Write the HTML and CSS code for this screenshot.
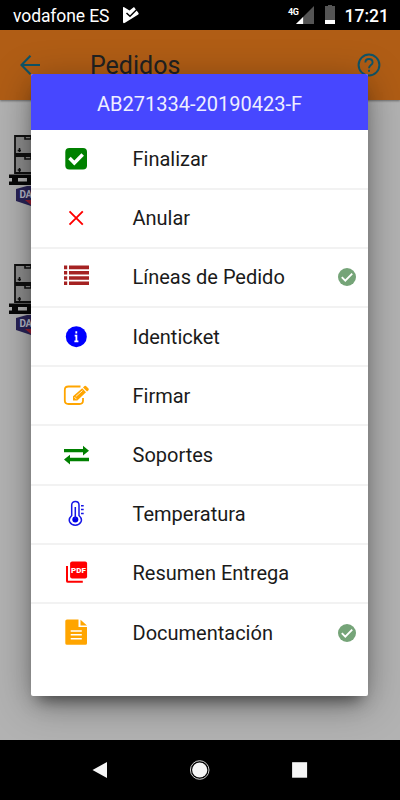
FILE: index.html
```html
<!DOCTYPE html>
<html lang="es">
<head>
    <meta charset="UTF-8">
    <meta name="viewport" content="width=device-width, initial-scale=1.0">
    <title>Pedidos</title>
    <link rel="stylesheet" href="styles.css">
</head>
<body>

<div class="status-bar">
    <span class="carrier">vodafone ES</span>
    <svg class="play" width="17" height="18" viewBox="0 0 17 18">
        <path d="M0 1.500Q0 .6 1.200 1.200L6.500 4.500L11 1L15.500 7Q16 7.700 15.300 8.400L2 16.800Q0 17.800 0 16Z" fill="#fff"/>
        <path d="M3.500 7L7 10.300L14.500 2.800" fill="none" stroke="#000" stroke-width="1.500"/>
    </svg>
    <span class="network">4G</span>
    <svg class="signal" width="18" height="18" viewBox="0 0 19 19">
        <path d="M19 0V19H0Z" fill="#555"/>
        <path d="M7.5 11.5V19H0Z" fill="#fff"/>
    </svg>
    <svg class="battery" width="10" height="19" viewBox="0 0 10 19">
        <path d="M0 1H3V0H7V1H10V19H0Z" fill="#555"/>
        <rect y="15" width="10" height="4" fill="#fff"/>
    </svg>
    <span class="time">17:21</span>
</div>

<header class="toolbar">
    <svg class="back" width="20" height="20" viewBox="0 0 20 20">
        <path d="M20 10H2M10.500 .8L1.500 10L10.500 19.200" fill="none" stroke="#0f5468" stroke-width="2.1"/>
    </svg>
    <h1>Pedidos</h1>
    <svg class="help" width="24" height="24" viewBox="0 0 24 24">
        <circle cx="12" cy="12" r="10.4" fill="none" stroke="#0f5468" stroke-width="2"/>
        <path d="M8.4 9.4C8.4 4.8 15.6 4.8 15.6 9.4C15.6 12 12 12.2 12 15.2" fill="none" stroke="#0f5468" stroke-width="1.9"/>
        <rect x="11" y="16.8" width="2" height="2" fill="#0f5468"/>
    </svg>
</header>

<main class="orders">
    <div class="order">
        <svg width="50" height="72" viewBox="0 0 50 72">
            <path d="M6 1H44V19H6ZM6 21H44V38H6Z" fill="#8d8d8d" stroke="#111" stroke-width="1.8"/>
            <path d="M16 1V4H22V1M16 21V24H22V21" fill="none" stroke="#111" stroke-width="1.6"/>
            <path d="M10.500 13V17M8.700 15.500H12M10.500 33V37M8.700 35H12" stroke="#111" stroke-width="1.5"/>
            <path d="M0 39.500H50V43H0ZM0 46.500H50V50H0ZM3 43H9V47H3ZM18 43H26V47H18Z" fill="#080808"/>
            <path d="M7 54L18 51H36L46 54V66L30 71H22L7 66Z" fill="#2a2458"/>
            <path d="M16 65H30L22 70Z" fill="#9b2033"/>
            <text class="brand" x="10.500" y="63">DA</text>
        </svg>
    </div>
    <div class="order">
        <svg width="50" height="72" viewBox="0 0 50 72">
            <path d="M6 1H44V19H6ZM6 21H44V38H6Z" fill="#8d8d8d" stroke="#111" stroke-width="1.8"/>
            <path d="M16 1V4H22V1M16 21V24H22V21" fill="none" stroke="#111" stroke-width="1.6"/>
            <path d="M10.500 13V17M8.700 15.500H12M10.500 33V37M8.700 35H12" stroke="#111" stroke-width="1.5"/>
            <path d="M0 39.500H50V43H0ZM0 46.500H50V50H0ZM3 43H9V47H3ZM18 43H26V47H18Z" fill="#080808"/>
            <path d="M7 54L18 51H36L46 54V66L30 71H22L7 66Z" fill="#2a2458"/>
            <path d="M16 65H30L22 70Z" fill="#9b2033"/>
            <text class="brand" x="10.500" y="63">DA</text>
        </svg>
    </div>
</main>

<nav class="nav-bar">
    <svg width="20" height="20" viewBox="0 0 20 20">
        <path d="M2.500 10L17 2V18Z" fill="#f5f5f5"/>
    </svg>
    <svg width="20" height="20" viewBox="0 0 20 20">
        <circle cx="9.700" cy="10" r="9.300" fill="none" stroke="#ccc" stroke-width="1"/>
        <circle cx="9.700" cy="10" r="7.600" fill="#f5f5f5"/>
    </svg>
    <svg width="20" height="20" viewBox="0 0 20 20">
        <rect x="2.100" y="2.200" width="15" height="15.500" fill="#f5f5f5"/>
    </svg>
</nav>

<div class="modal">
    <h2>AB271334-20190423-F</h2>
    <ul>
        <li>
            <svg class="icon" width="28" height="28" viewBox="0 0 28 28">
                <rect x="3.300" y="2.900" width="21.700" height="21.700" rx="4" fill="#008000"/>
                <path d="M7.500 13.100L12.300 17.900L20.700 9.400" fill="none" stroke="#fff" stroke-width="3.500"/>
            </svg>
            <span>Finalizar</span>
        </li>
        <li>
            <svg class="icon" width="28" height="28" viewBox="0 0 28 28">
                <path d="M7.500 7.300L20.800 20.600M20.800 7.300L7.500 20.600" stroke="#f00" stroke-width="1.900"/>
            </svg>
            <span>Anular</span>
        </li>
        <li>
            <svg class="icon" width="28" height="28" viewBox="0 0 28 28">
                <path d="M2 4.400H5.200M7 4.400H27M2 9.700H5.200M7 9.700H27M2 15H5.200M7 15H27M2 20.300H5.200M7 20.300H27" stroke="#a52222" stroke-width="3.600"/>
            </svg>
            <span>Líneas de Pedido</span>
            <svg class="done" width="18" height="18" viewBox="0 0 18 18">
                <circle cx="9" cy="9" r="9" fill="#75a478"/>
                <path d="M3.800 9.200L7.300 12.700L14.200 5.700" fill="none" stroke="#fff" stroke-width="1.900"/>
            </svg>
        </li>
        <li>
            <svg class="icon" width="28" height="28" viewBox="0 0 28 28">
                <circle cx="14.300" cy="13.700" r="10.500" fill="#00f"/>
                <path d="M14.300 8.200V10.500M12.700 12.700H14.400V18.700M12.400 18.400H16.400" fill="none" stroke="#fff" stroke-width="1.800"/>
            </svg>
            <span>Identicket</span>
        </li>
        <li>
            <svg class="icon" width="28" height="28" viewBox="0 0 28 28">
                <path d="M18.500 4.500H6.500Q2.800 4.500 2.800 8V18.500Q2.800 22 6.500 22H17.500Q21 22 21 18.500V16" fill="none" stroke="#ffa500" stroke-width="1.800"/>
                <path d="M11 14.200L20.200 6.200L24 10.300L15.300 18.400H11Z" fill="#ffa500"/>
                <path d="M21 5.400L22.500 4.100Q23.500 3.400 24.500 4.400L26.500 6.500Q27.300 7.500 26.300 8.400L25 9.600Z" fill="#ffa500"/>
                <path d="M13.800 14.500L20.500 8.600M12.500 15.200L14.500 17.200" stroke="#fff" stroke-width=".8"/>
            </svg>
            <span>Firmar</span>
        </li>
        <li>
            <svg class="icon" width="28" height="28" viewBox="0 0 28 28">
                <path d="M2 8H21V4.800L27 9.700L21 14.500V11.300H2Z" fill="#008000"/>
                <path d="M27 16.800H8V13.700L2 18.600L8 23.400V20.200H27Z" fill="#008000"/>
            </svg>
            <span>Soportes</span>
        </li>
        <li>
            <svg class="icon" width="28" height="28" viewBox="0 0 28 28">
                <path d="M9.700 15.500V5C9.700 .2 17 .2 17 5V15.500C22.300 20.500 17.800 25.200 13.300 25.200C8.700 25.200 4.500 20.500 9.700 15.500Z" fill="none" stroke="#1717e6" stroke-width="1.500"/>
                <circle cx="13.300" cy="19.500" r="3" fill="#0000e8"/>
                <path d="M13.300 19V7M19 5.800H21.700M19 9.600H21.700M19 13.400H21.700" fill="none" stroke="#1717e6" stroke-width="1.500"/>
            </svg>
            <span>Temperatura</span>
        </li>
        <li>
            <svg class="icon" width="28" height="28" viewBox="0 0 28 28">
                <rect x="8.100" y="2.600" width="17" height="17" rx="2" fill="#f00"/>
                <path d="M5 7.100V21.900Q5 22.800 6 22.800H20.800" fill="none" stroke="#f00" stroke-width="2"/>
                <text class="pdf" x="9" y="14">PDF</text>
            </svg>
            <span>Resumen Entrega</span>
        </li>
        <li>
            <svg class="icon" width="28" height="28" viewBox="0 0 28 28">
                <path d="M5 .4H16.500V8H25V24.200Q25 25.700 23.500 25.700H5Q3.300 25.700 3.300 24.200V1.900Q3.300 .4 5 .4Z" fill="#ffa500"/>
                <path d="M18.500 .7L25 6.500H18.500Z" fill="#ffa500"/>
                <path d="M8.700 11.900H19.800M8.700 15.800H19.800M8.700 19.700H19.800" stroke="#fff" stroke-width="1.500"/>
            </svg>
            <span>Documentación</span>
            <svg class="done" width="18" height="18" viewBox="0 0 18 18">
                <circle cx="9" cy="9" r="9" fill="#75a478"/>
                <path d="M3.800 9.200L7.300 12.700L14.200 5.700" fill="none" stroke="#fff" stroke-width="1.900"/>
            </svg>
        </li>
    </ul>
</div>

</body>
</html>
```
FILE: styles.css
```css
body {
    font-family: Roboto, sans-serif;
    background-color: #b2b2b2;
    margin: 0;
    height: 800px;
    display: flex;
    flex-direction: column;
    overflow: hidden;
    position: relative;
}
svg {
    display: block;
    flex-shrink: 0;
}
.status-bar {
    background-color: #000;
    color: white;
    height: 30px;
    box-sizing: border-box;
    padding: 0 11px 0 13px;
    display: flex;
    align-items: center;
    position: relative;
    z-index: 3;
}
.carrier {
    font-size: 17.5px;
    line-height: 30px;
    letter-spacing: -0.1px;
    padding-top: 1px;
}
.play {
    margin-left: 14px;
}
.network {
    font-size: 9px;
    font-weight: bold;
    letter-spacing: -0.4px;
    margin-left: auto;
    margin-bottom: 7px;
}
.signal {
    margin-left: -3px;
}
.battery {
    margin-left: 11px;
    margin-bottom: 1px;
}
.time {
    font-size: 17.5px;
    font-weight: 500;
    margin-left: 10px;
    padding-top: 1px;
}
.toolbar {
    background-color: #b05d15;
    height: 70px;
    box-sizing: border-box;
    padding: 0 19.5px 0 20px;
    display: flex;
    align-items: center;
    box-shadow: 0 1px 2px rgba(0, 0, 0, 0.4);
}
.toolbar h1 {
    color: #212121;
    font-size: 25px;
    font-weight: normal;
    margin: 0 auto 0 50px;
}
.orders {
    flex: 1;
    padding: 35px 9px;
}
.order {
    height: 129px;
}
.brand {
    font-size: 10px;
    font-weight: bold;
    letter-spacing: -0.5px;
    fill: #b9b9c8;
}
.nav-bar {
    background-color: #000;
    height: 60px;
    box-sizing: border-box;
    padding: 0 90px;
    display: flex;
    align-items: center;
    justify-content: space-between;
    position: relative;
    z-index: 3;
}
.modal {
    background-color: white;
    width: 337px;
    height: 622px;
    position: absolute;
    top: 74px;
    left: 31px;
    border-radius: 2px;
    overflow: hidden;
    box-shadow: 0 11px 15px -7px rgba(0, 0, 0, 0.5), 0 8px 38px rgba(0, 0, 0, 0.35);
}
.modal h2 {
    background-color: #4747ff;
    color: #eeeeff;
    font-size: 20px;
    font-weight: normal;
    line-height: 60px;
    height: 56px;
    text-align: center;
    margin: 0;
}
.modal ul {
    list-style-type: none;
    padding: 0.4px 0 0;
    margin: 0;
}
.modal li {
    height: 59.2px;
    box-sizing: border-box;
    border-bottom: 2px solid #f2f2f2;
    padding: 0 12px 0 31px;
    display: flex;
    align-items: center;
}
.modal li:last-child {
    border-bottom: none;
    padding-bottom: 1px;
}
.modal li span {
    color: #1a1a1a;
    font-size: 20px;
    margin-left: 42.5px;
}
.done {
    margin-left: auto;
}
.pdf {
    font-size: 8px;
    font-weight: 900;
    fill: white;
}
```
